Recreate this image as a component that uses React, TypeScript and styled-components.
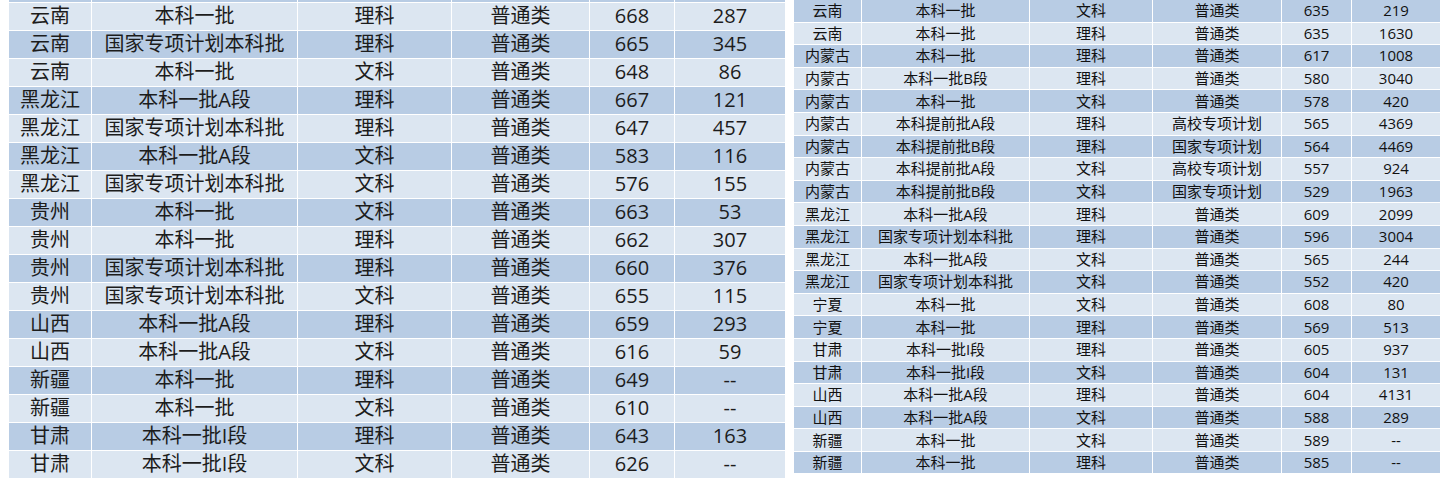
import styled, {createGlobalStyle} from "styled-components";

type Entry = [string, string, string, string, string, string]

const leftRows: Entry[] = [
    ["云南", "本科一批", "理科", "普通类", "668", "287"],
    ["云南", "国家专项计划本科批", "理科", "普通类", "665", "345"],
    ["云南", "本科一批", "文科", "普通类", "648", "86"],
    ["黑龙江", "本科一批A段", "理科", "普通类", "667", "121"],
    ["黑龙江", "国家专项计划本科批", "理科", "普通类", "647", "457"],
    ["黑龙江", "本科一批A段", "文科", "普通类", "583", "116"],
    ["黑龙江", "国家专项计划本科批", "文科", "普通类", "576", "155"],
    ["贵州", "本科一批", "文科", "普通类", "663", "53"],
    ["贵州", "本科一批", "理科", "普通类", "662", "307"],
    ["贵州", "国家专项计划本科批", "理科", "普通类", "660", "376"],
    ["贵州", "国家专项计划本科批", "文科", "普通类", "655", "115"],
    ["山西", "本科一批A段", "理科", "普通类", "659", "293"],
    ["山西", "本科一批A段", "文科", "普通类", "616", "59"],
    ["新疆", "本科一批", "理科", "普通类", "649", "--"],
    ["新疆", "本科一批", "文科", "普通类", "610", "--"],
    ["甘肃", "本科一批I段", "理科", "普通类", "643", "163"],
    ["甘肃", "本科一批I段", "文科", "普通类", "626", "--"],
]

const rightRows: Entry[] = [
    ["云南", "本科一批", "文科", "普通类", "635", "219"],
    ["云南", "本科一批", "理科", "普通类", "635", "1630"],
    ["内蒙古", "本科一批", "理科", "普通类", "617", "1008"],
    ["内蒙古", "本科一批B段", "理科", "普通类", "580", "3040"],
    ["内蒙古", "本科一批", "文科", "普通类", "578", "420"],
    ["内蒙古", "本科提前批A段", "理科", "高校专项计划", "565", "4369"],
    ["内蒙古", "本科提前批B段", "理科", "国家专项计划", "564", "4469"],
    ["内蒙古", "本科提前批A段", "文科", "高校专项计划", "557", "924"],
    ["内蒙古", "本科提前批B段", "文科", "国家专项计划", "529", "1963"],
    ["黑龙江", "本科一批A段", "理科", "普通类", "609", "2099"],
    ["黑龙江", "国家专项计划本科批", "理科", "普通类", "596", "3004"],
    ["黑龙江", "本科一批A段", "文科", "普通类", "565", "244"],
    ["黑龙江", "国家专项计划本科批", "文科", "普通类", "552", "420"],
    ["宁夏", "本科一批", "文科", "普通类", "608", "80"],
    ["宁夏", "本科一批", "理科", "普通类", "569", "513"],
    ["甘肃", "本科一批I段", "理科", "普通类", "605", "937"],
    ["甘肃", "本科一批I段", "文科", "普通类", "604", "131"],
    ["山西", "本科一批A段", "理科", "普通类", "604", "4131"],
    ["山西", "本科一批A段", "文科", "普通类", "588", "289"],
    ["新疆", "本科一批", "文科", "普通类", "589", "--"],
    ["新疆", "本科一批", "理科", "普通类", "585", "--"],
]

const LIGHT = "#dce6f1"
const DARK = "#b8cce4"

const GlobalStyle = createGlobalStyle`
    html, body {
        margin: 0;
        padding: 0;
        background: #ffffff;
    }
`

const Page = styled.div`
    display: flex;
    align-items: flex-start;
    gap: 9px;
    padding-left: 9px;
    width: 1448px;
    height: 478px;
    overflow: hidden;
    box-sizing: border-box;
    font-family: "Open Sans", "Noto Sans CJK SC", sans-serif;
`

const Sheet = styled.div<{$width: number}>`
    display: flex;
    flex-direction: column;
    gap: 1px;
    width: ${props => props.$width}px;
`

const Row = styled.div<{$cols: string, $height: number, $dark: boolean}>`
    display: grid;
    grid-template-columns: ${props => props.$cols};
    column-gap: 1px;
    height: ${props => props.$height}px;

    & > div {
        background: ${props => props.$dark ? DARK : LIGHT};
    }
`

const Cell = styled.div<{$size: number, $ink: string}>`
    display: flex;
    align-items: center;
    justify-content: center;
    white-space: nowrap;
    font-size: ${props => props.$size}px;
    color: ${props => props.$ink};
    line-height: 1;
`

const LEFT_COLS = "82px 205px 153px 137px 84px 110px"
const RIGHT_COLS = "67px 167px 122px 128px 69px 88px"

const Table = ({rows, cols, width, rowHeight, size, ink, firstDark, topStrip = 0}: {
    rows: Entry[], cols: string, width: number, rowHeight: number, size: number, ink: string,
    firstDark: boolean, topStrip?: number
}) => <Sheet $width={width}>
    {topStrip > 0 && <Row $cols={cols} $height={topStrip} $dark={!firstDark}>
        {[0, 1, 2, 3, 4, 5].map(i => <div key={i}/>)}
    </Row>}
    {rows.map((row, i) => <Row key={i} $cols={cols} $height={rowHeight} $dark={(i % 2 === 0) === firstDark}>
        {row.map((text, j) => <Cell key={j} $size={size} $ink={ink}>{text}</Cell>)}
    </Row>)}
</Sheet>

export default function App() {
    return <>
        <GlobalStyle/>
        <Page>
            <Table rows={leftRows} cols={LEFT_COLS} width={776} rowHeight={27} size={20} ink="#1c1c1c"
                   firstDark={false} topStrip={1.7}/>
            <Table rows={rightRows} cols={RIGHT_COLS} width={646} rowHeight={21.6} size={15} ink="#111111"
                   firstDark={true}/>
        </Page>
    </>
}
